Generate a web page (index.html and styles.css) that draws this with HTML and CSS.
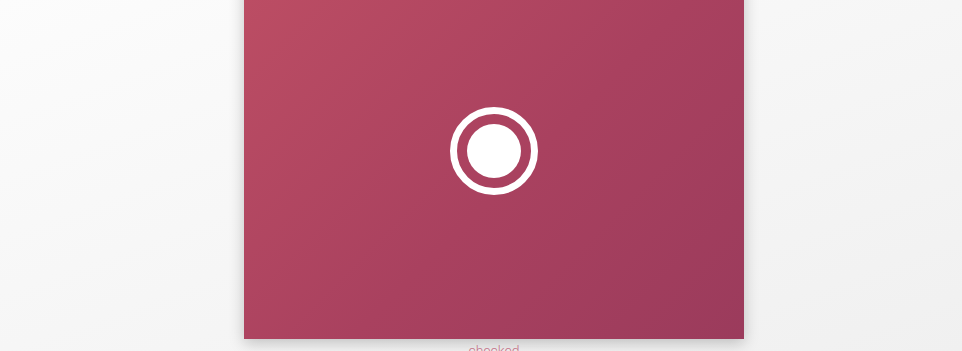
FILE: index.html
```html
<!DOCTYPE html>
<html lang="en">
<head>
    <meta charset="UTF-8">
    <meta name="viewport" content="width=device-width, initial-scale=1.0">
    <title>Radio</title>
    <link rel="stylesheet" href="styles.css">
</head>
<body>
    <div class="stage">
        <div class="card">
            <svg class="radio" width="90" height="90" viewBox="0 0 90 90">
                <circle cx="45" cy="45" r="40.5" fill="none" stroke="#fff" stroke-width="7"/>
                <circle cx="45" cy="45" r="27" fill="#fff"/>
            </svg>
        </div>
        <p class="label">checked</p>
    </div>
</body>
</html>
```

FILE: styles.css
```css
html, body {
    height: 100%;
}

body {
    margin: 0;
    font-family: Roboto, "Liberation Sans", sans-serif;
    background: linear-gradient(160deg, #fcfcfc 0%, #f0f0f0 100%);
    overflow: hidden;
}

.stage {
    display: flex;
    flex-direction: column;
    align-items: center;
    margin-top: -37px;
    padding-left: 26px;
}

.card {
    width: 500px;
    height: 376px;
    background: linear-gradient(135deg, #bd4e64 0%, #a9415f 55%, #9b3b5c 100%);
    box-shadow: 0 4px 14px rgba(0,0,0,0.22);
    display: flex;
    justify-content: center;
    align-items: center;
}

.label {
    margin: 3px 0 0;
    font-size: 14px;
    font-weight: 300;
    color: #c47489;
    line-height: 18px;
}
```
